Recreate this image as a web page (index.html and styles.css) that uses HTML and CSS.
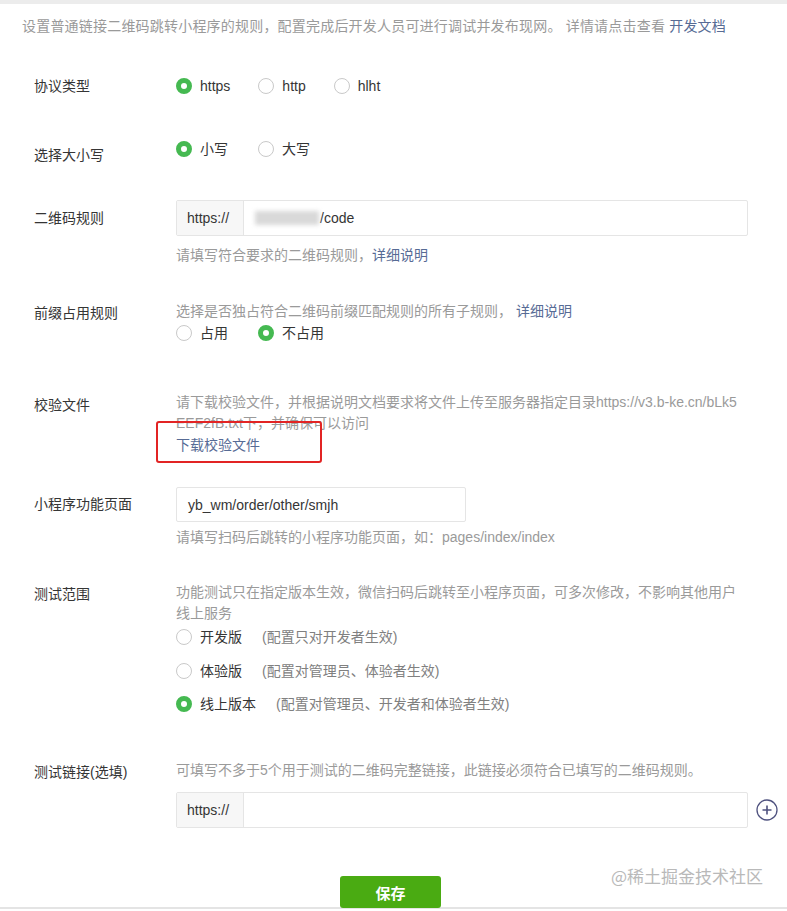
FILE: index.html
```html
<!DOCTYPE html>
<html lang="zh-CN">
<head>
<meta charset="utf-8">
<title>普通链接二维码规则</title>
<link rel="stylesheet" href="styles.css">
</head>
<body>
<div class="topbar"></div>
<div class="page">
  <p class="intro">设置普通链接二维码跳转小程序的规则，配置完成后开发人员可进行调试并发布现网。 详情请点击查看 <a class="link">开发文档</a></p>

  <div class="row row-protocol">
    <div class="label">协议类型</div>
    <div class="content radios">
      <label class="radio"><span class="dot on"></span><span>https</span></label>
      <label class="radio"><span class="dot"></span><span>http</span></label>
      <label class="radio"><span class="dot"></span><span>hlht</span></label>
    </div>
  </div>

  <div class="row row-case">
    <div class="label label-low">选择大小写</div>
    <div class="content radios">
      <label class="radio"><span class="dot on"></span><span>小写</span></label>
      <label class="radio"><span class="dot"></span><span>大写</span></label>
    </div>
  </div>

  <div class="row row-rule">
    <div class="label label-input">二维码规则</div>
    <div class="content">
      <div class="input wide">
        <span class="prefix">https://</span>
        <span class="value"><span class="blur"></span>/code</span>
      </div>
      <p class="hint hint-gap">请填写符合要求的二维码规则，<a class="link">详细说明</a></p>
    </div>
  </div>

  <div class="row row-prefix">
    <div class="label">前缀占用规则</div>
    <div class="content">
      <p class="hint">选择是否独占符合二维码前缀匹配规则的所有子规则， <a class="link">详细说明</a></p>
      <div class="radios">
        <label class="radio"><span class="dot"></span><span>占用</span></label>
        <label class="radio"><span class="dot on"></span><span>不占用</span></label>
      </div>
    </div>
  </div>

  <div class="row row-file">
    <div class="label">校验文件</div>
    <div class="content">
      <p class="hint tight nowrap">请下载校验文件，并根据说明文档要求将文件上传至服务器指定目录https://v3.b-ke.cn/bLk5<br>EEF2fB.txt下，并确保可以访问</p>
      <div class="download"><a class="link">下载校验文件</a><span class="mark"></span></div>
    </div>
  </div>

  <div class="row row-page">
    <div class="label label-input">小程序功能页面</div>
    <div class="content">
      <div class="input narrow"><span class="value">yb_wm/order/other/smjh</span></div>
      <p class="hint hint-gap-sm">请填写扫码后跳转的小程序功能页面，如：pages/index/index</p>
    </div>
  </div>

  <div class="row row-scope">
    <div class="label">测试范围</div>
    <div class="content">
      <p class="hint tight nowrap">功能测试只在指定版本生效，微信扫码后跳转至小程序页面，可多次修改，不影响其他用户<br>线上服务</p>
      <div class="vradios">
        <label class="radio"><span class="dot"></span><span class="opt">开发版</span><span class="note">(配置只对开发者生效)</span></label>
        <label class="radio"><span class="dot"></span><span class="opt">体验版</span><span class="note">(配置对管理员、体验者生效)</span></label>
        <label class="radio"><span class="dot on"></span><span class="opt">线上版本</span><span class="note">(配置对管理员、开发者和体验者生效)</span></label>
      </div>
    </div>
  </div>

  <div class="row row-test">
    <div class="label">测试链接(选填)</div>
    <div class="content">
      <p class="hint">可填写不多于5个用于测试的二维码完整链接，此链接必须符合已填写的二维码规则。</p>
      <div class="input-line">
        <div class="input wide"><span class="prefix">https://</span><span class="value"></span></div>
        <svg class="plus" width="22" height="22" viewBox="0 0 22 22"><circle cx="11" cy="11" r="10" fill="none" stroke="#4f527f" stroke-width="1.3"/><path d="M11 6.5v9M6.5 11h9" stroke="#4f527f" stroke-width="1.6"/></svg>
      </div>
    </div>
  </div>

  <div class="actions">
    <button class="save">保存</button>
    <span class="watermark">@稀土掘金技术社区</span>
  </div>
</div>
</body>
</html>
```
FILE: styles.css
```css
* { box-sizing: border-box; }
html, body { margin: 0; padding: 0; background: #fff; }
body {
  font-family: "Liberation Sans", "Noto Sans CJK SC", sans-serif;
  font-size: 14px;
  line-height: 22px;
  color: #353535;
  width: 787px;
  height: 911px;
  overflow: hidden;
}
p { margin: 0; }
.topbar { height: 4px; background: #ececec; }
.page {
  position: relative;
  height: 905px;
  border-bottom: 2px solid #e4e4e4;
}
.intro {
  color: #9a9a9a;
  padding: 11px 0 0 22px;
  letter-spacing: 0.2px;
}
.link { color: #576b95; text-decoration: none; }

.row { display: flex; padding-left: 34px; }
.label { width: 142px; flex: none; }
.content { flex: 1; min-width: 0; }
.hint { color: #9a9a9a; }
.tight { line-height: 21px; }
.nowrap { white-space: nowrap; }

.radios { display: flex; gap: 28px; }
.radio { display: flex; align-items: center; height: 22px; }
.dot {
  width: 16px; height: 16px; border-radius: 50%;
  border: 1px solid #c9c9c9; background: #fff;
  margin-right: 8px; flex: none;
}
.dot.on { border: 5px solid #45b951; }

.row-protocol { margin-top: 38px; }
.row-case { margin-top: 41px; }
.row-case .radios { gap: 30px; }
.label-low { padding-top: 6px; }
.row-rule { margin-top: 34px; }
.label-input { align-self: flex-start; }
.row-rule .label { padding-top: 7px; }

.input {
  display: flex; height: 36px; flex: none;
  border: 1px solid #e5e5e5; border-radius: 2px;
  background: #fff; align-items: stretch;
}
.input.wide { width: 572px; }
.input.narrow { width: 290px; height: 35px; }
.prefix {
  width: 67px; flex: none; background: #f7f7f7;
  border-right: 1px solid #e5e5e5;
  display: flex; align-items: center; padding-left: 10px;
}
.value { display: flex; align-items: center; padding-left: 11px; }
.blur {
  display: inline-block; width: 64px; height: 14px;
  background: #d9d9d9; filter: blur(2px); margin-right: 1px;
}
.hint-gap { margin-top: 8px; }
.hint-gap-sm { margin-top: 4px; }

.row-prefix { margin-top: 34px; }
.row-prefix .label { padding-top: 2px; }
.row-prefix .radios { gap: 30px; }

.row-file { margin-top: 48px; }
.row-file .label { padding-top: 2px; }
.download { position: relative; display: inline-block; }
.mark {
  position: absolute; left: -20px; top: -13px;
  width: 166px; height: 42px;
  border: 2.5px solid #e22424; border-radius: 3px;
}

.row-page { margin-top: 31px; }
.row-page .label { padding-top: 6px; }

.row-scope { margin-top: 34px; }
.row-scope .label { padding-top: 1px; }
.vradios { display: flex; flex-direction: column; gap: 12px; margin-top: 2px; }
.vradios .radio:last-child { margin-top: -1px; }
.opt { color: #353535; margin-right: 20px; }
.note { color: #808080; }

.row-test { margin-top: 44px; }
.row-test .label { padding-top: 2px; }
.input-line { display: flex; align-items: center; margin-top: 11px; }
.plus { margin-left: 8px; flex: none; }

.actions { position: relative; display: flex; justify-content: center; margin-top: 48px; padding-right: 6px; }
.save {
  width: 101px; height: 32px;
  background: #4aab12; color: #fff;
  border: none; border-radius: 3px;
  font-family: "Noto Sans CJK SC", sans-serif;
  font-size: 15px; font-weight: bold;
}
.watermark {
  position: absolute; right: 24px; top: -11px;
  color: #b9b9b9; font-size: 17px;
  font-family: "Noto Sans CJK SC", sans-serif;
}
```
